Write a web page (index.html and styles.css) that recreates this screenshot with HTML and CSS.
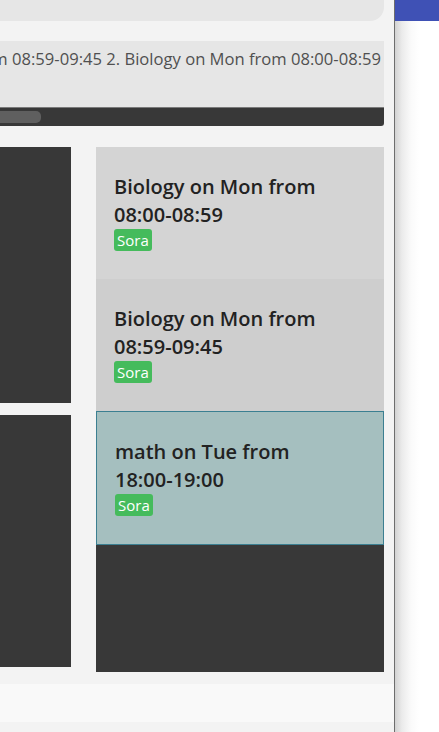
FILE: index.html
```html
<!DOCTYPE html>
<html lang="en">
<head>
    <meta charset="UTF-8">
    <meta name="viewport" content="width=device-width, initial-scale=1.0">
    <title>Schedule</title>
    <link rel="stylesheet" href="styles.css">
</head>
<body>
    <div class="drawer">
        <div class="summary-top"></div>

        <div class="summary">
            <div class="summary-text">
                <span>1. math on Tue from 18:00-19:00 1. Biology on Mon from 08:59-09:45 2. Biology on Mon from 08:00-08:59</span>
            </div>
            <div class="scrollbar">
                <div class="thumb"></div>
            </div>
        </div>

        <div class="columns">
            <div class="side">
                <div class="side-block first"></div>
                <div class="side-block second"></div>
            </div>
            <div class="list">
                <div class="entry">
                    <div class="entry-title">Biology on Mon from 08:00-08:59</div>
                    <span class="badge">Sora</span>
                </div>
                <div class="entry alt">
                    <div class="entry-title">Biology on Mon from 08:59-09:45</div>
                    <span class="badge">Sora</span>
                </div>
                <div class="entry active">
                    <div class="entry-title">math on Tue from 18:00-19:00</div>
                    <span class="badge">Sora</span>
                </div>
                <div class="list-rest"></div>
            </div>
        </div>

        <div class="footer"></div>
    </div>

    <div class="page">
        <div class="appbar"></div>
        <div class="page-body"></div>
    </div>
</body>
</html>
```

FILE: styles.css
```css
body {
    font-family: 'Open Sans', 'DejaVu Sans', sans-serif;
    margin: 0;
    height: 732px;
    display: flex;
    overflow: hidden;
    background-color: #fff;
}

.drawer {
    width: 384px;
    padding-right: 10px;
    background-color: #f3f3f3;
    border-right: 1px solid #6d6d6d;
    display: flex;
    flex-direction: column;
    flex-shrink: 0;
}

.summary-top {
    height: 21px;
    background-color: #e6e6e6;
    border-bottom-right-radius: 14px;
}

.summary {
    margin-top: 20px;
    background-color: #e6e6e6;
}

.summary-text {
    height: 58px;
    padding-top: 8px;
    padding-right: 3px;
    display: flex;
    justify-content: flex-end;
    overflow: hidden;
    white-space: nowrap;
    font-size: 16.6px;
    line-height: 20px;
    color: #505050;
}

.scrollbar {
    height: 18px;
    border-top: 1px solid #7a7a7a;
    background-color: #383838;
    border-bottom-right-radius: 3px;
    display: flex;
    align-items: center;
}

.thumb {
    width: 41px;
    height: 12px;
    background-color: #5f5f5f;
    border-radius: 0 5px 5px 0;
}

.columns {
    margin-top: 21px;
    height: 525px;
    display: flex;
    gap: 25px;
}

.side {
    width: 71px;
    display: flex;
    flex-direction: column;
    gap: 12px;
}

.side-block {
    background-color: #383838;
}

.side-block.first {
    height: 256px;
}

.side-block.second {
    height: 252px;
}

.list {
    flex: 1;
    display: flex;
    flex-direction: column;
    background-color: #383838;
}

.entry {
    height: 78px;
    padding: 26px 18px 28px;
    background-color: #d4d4d4;
}

.entry.alt {
    background-color: #cecece;
}

.entry.active {
    background-color: #a5bfbf;
    border: 1px solid #3b7f91;
}

.entry-title {
    font-size: 20px;
    line-height: 28px;
    font-weight: 600;
    color: #222;
    width: 220px;
}

.badge {
    display: inline-block;
    height: 22px;
    line-height: 22px;
    padding: 0 3px;
    font-size: 15px;
    color: #fff;
    background-color: #45bb5c;
    border-radius: 3px;
}

.list-rest {
    flex: 1;
}

.footer {
    margin-top: 12px;
    margin-right: -10px;
    height: 38px;
    background-color: #f9f9f9;
}

.page {
    flex: 1;
    display: flex;
    flex-direction: column;
}

.appbar {
    height: 21px;
    background-color: #3f51b5;
}

.page-body {
    flex: 1;
    background: linear-gradient(to right, #d2d2d2 0, #ebebeb 7px, #fafafa 16px, #fff 24px);
}
```
